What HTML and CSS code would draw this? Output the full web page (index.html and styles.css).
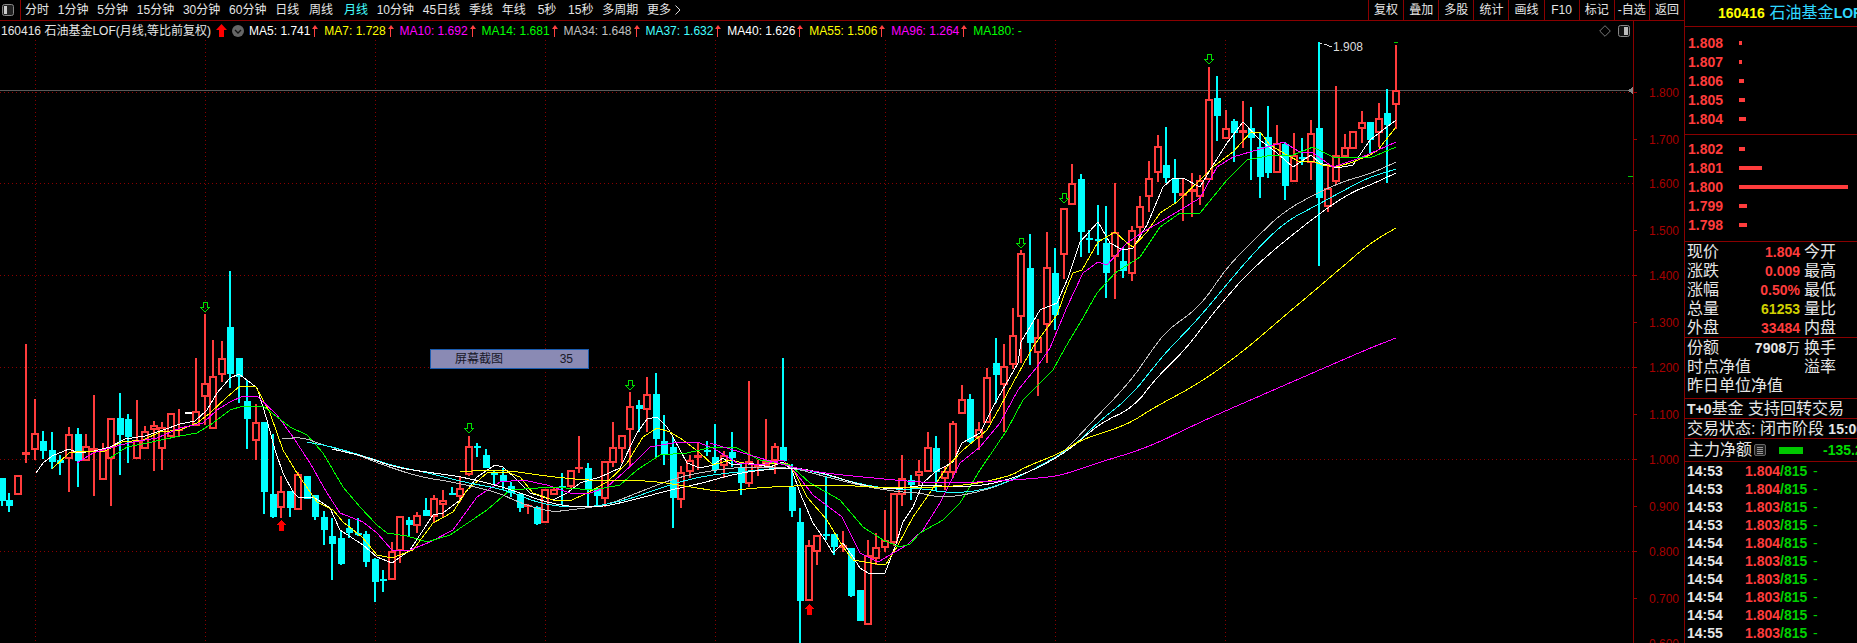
FILE: index.html
```html
<!DOCTYPE html>
<html lang="zh">
<head>
<meta charset="utf-8">
<title>160416 石油基金LOF</title>
<link rel="stylesheet" href="styles.css">
</head>
<body>
<div class="app">
  <main class="left">
    <nav class="toolbar">
      <span class="tool-icon"><svg width="12" height="12" viewBox="0 0 12 12"><rect x="0.5" y="0.5" width="11" height="11" rx="2" fill="#222" stroke="#888"/><rect x="2" y="2" width="3" height="8" fill="#ccc"/></svg></span>
      <div class="periods">
        <span>分时</span><span>1分钟</span><span>5分钟</span><span>15分钟</span><span>30分钟</span><span>60分钟</span><span>日线</span><span class="nudge1">周线</span><span class="nudge2">月线</span><span>10分钟</span><span>45日线</span><span>季线</span><span>年线</span><span class="nudge3">5秒</span><span class="nudge3">15秒</span><span>多周期</span><span class="more">更多<svg width="6" height="10" viewBox="0 0 6 10"><path d="M.5 .5L5 5 .5 9.5" fill="none" stroke="#ddd"/></svg></span>
      </div>
      <div class="actions">
        <span>复权</span><span>叠加</span><span>多股</span><span>统计</span><span>画线</span><span>F10</span><span>标记</span><span>-自选</span><span>返回</span>
      </div>
    </nav>
    <div class="infobar">
      <span class="title">160416 石油基金LOF(月线,等比前复权)</span>
      <svg class="up-big" width="11" height="13" viewBox="0 0 11 13"><path d="M5.5 0L11 6H8V13H3V6H0Z" fill="#ff0000"/></svg>
      <svg class="chev" width="12" height="12" viewBox="0 0 12 12"><circle cx="6" cy="6" r="6" fill="#666"/><path d="M3 5l3 3 3-3" fill="none" stroke="#111" stroke-width="1.3"/></svg>
      <span class="ma white">MA5: 1.741<b class="up"></b></span>
      <span class="ma yellow">MA7: 1.728<b class="up"></b></span>
      <span class="ma magenta">MA10: 1.692<b class="up"></b></span>
      <span class="ma green">MA14: 1.681<b class="up"></b></span>
      <span class="ma grey">MA34: 1.648<b class="up"></b></span>
      <span class="ma cyan">MA37: 1.632<b class="up"></b></span>
      <span class="ma white">MA40: 1.626<b class="up"></b></span>
      <span class="ma yellow">MA55: 1.506<b class="up"></b></span>
      <span class="ma magenta">MA96: 1.264<b class="up"></b></span>
      <span class="ma green">MA180: -</span>
      <div class="corner">
        <svg width="12" height="12" viewBox="0 0 12 12"><path d="M6 .7L11.3 6 6 11.3 .7 6Z" fill="none" stroke="#777"/></svg>
        <svg width="12" height="12" viewBox="0 0 12 12"><rect x="0.5" y="0.5" width="11" height="11" rx="2" fill="#111" stroke="#888"/><rect x="6" y="2" width="4" height="8" fill="#bbb"/></svg>
      </div>
    </div>
    <section class="chart">
      <svg id="kline" width="1684" height="603" viewBox="0 40 1684 603"></svg>
      <div class="tip"><span>屏幕截图</span><span>35</span></div>
    </section>
  </main>

  <aside class="side">
    <header class="side-head"><b class="code">160416</b> <span class="name">石油基金<b>LOF</b></span></header>
    <div class="book sell">
      <div class="lvl"><b>1.808</b><i class="bar" style="width:3px"></i></div>
      <div class="lvl"><b>1.807</b><i class="bar" style="width:3px"></i></div>
      <div class="lvl"><b>1.806</b><i class="bar" style="width:5px"></i></div>
      <div class="lvl"><b>1.805</b><i class="bar" style="width:6px"></i></div>
      <div class="lvl"><b>1.804</b><i class="bar" style="width:7px"></i></div>
    </div>
    <div class="book buy">
      <div class="lvl"><b>1.802</b><i class="bar" style="width:6px"></i></div>
      <div class="lvl"><b>1.801</b><i class="bar" style="width:23px"></i></div>
      <div class="lvl"><b>1.800</b><i class="bar" style="width:109px"></i></div>
      <div class="lvl"><b>1.799</b><i class="bar" style="width:8px"></i></div>
      <div class="lvl"><b>1.798</b><i class="bar" style="width:8px"></i></div>
    </div>
    <div class="stats">
      <div class="stat"><span>现价</span><b class="red">1.804</b><span>今开</span></div>
      <div class="stat"><span>涨跌</span><b class="red">0.009</b><span>最高</span></div>
      <div class="stat"><span>涨幅</span><b class="red">0.50%</b><span>最低</span></div>
      <div class="stat"><span>总量</span><b class="olive">61253</b><span>量比</span></div>
      <div class="stat"><span>外盘</span><b class="red">33484</b><span>内盘</span></div>
    </div>
    <div class="stats fund">
      <div class="stat"><span>份额</span><b class="plain">7908<em>万</em></b><span>换手</span></div>
      <div class="stat"><span class="wide">时点净值</span><b></b><span>溢率</span></div>
      <div class="stat"><span class="wide">昨日单位净值</span></div>
    </div>
    <div class="line-row"><b>T+0</b>基金 支持回转交易</div>
    <div class="line-row">交易状态: 闭市阶段 <b class="clock">15:00</b></div>
    <div class="flow">
      <span>主力净额</span>
      <svg class="flow-ico" width="12" height="12" viewBox="0 0 12 12"><rect x="0.5" y="0.5" width="11" height="11" rx="1.5" fill="#222" stroke="#666"/><path d="M3 3.5H9M3 5.5H9M3 7.5H9M3 9.5H9" stroke="#999"/></svg>
      <i class="flow-bar"></i>
      <b class="flow-val">-135.2</b>
    </div>
    <div class="ticks">
      <div class="tick"><b class="t">14:53</b><b class="p">1.804</b><b class="v">/815</b><b class="d">-</b></div>
      <div class="tick"><b class="t">14:53</b><b class="p">1.804</b><b class="v">/815</b><b class="d">-</b></div>
      <div class="tick"><b class="t">14:53</b><b class="p">1.803</b><b class="v">/815</b><b class="d">-</b></div>
      <div class="tick"><b class="t">14:53</b><b class="p">1.803</b><b class="v">/815</b><b class="d">-</b></div>
      <div class="tick"><b class="t">14:54</b><b class="p">1.804</b><b class="v">/815</b><b class="d">-</b></div>
      <div class="tick"><b class="t">14:54</b><b class="p">1.803</b><b class="v">/815</b><b class="d">-</b></div>
      <div class="tick"><b class="t">14:54</b><b class="p">1.803</b><b class="v">/815</b><b class="d">-</b></div>
      <div class="tick"><b class="t">14:54</b><b class="p">1.803</b><b class="v">/815</b><b class="d">-</b></div>
      <div class="tick"><b class="t">14:54</b><b class="p">1.804</b><b class="v">/815</b><b class="d">-</b></div>
      <div class="tick"><b class="t">14:55</b><b class="p">1.803</b><b class="v">/815</b><b class="d">-</b></div>
    </div>
  </aside>
</div>
<script src="chart.js"></script>
</body>
</html>
```

FILE: styles.css
```css
* { box-sizing: border-box; }
html, body { margin: 0; height: 100%; background: #000; overflow: hidden; }
body { font: 12px/1 "Liberation Sans", "Noto Sans CJK SC", sans-serif; color: #e6e6e6; }
.app { display: flex; width: 1857px; height: 643px; }
.left { width: 1684px; display: flex; flex-direction: column; flex: none; }
.toolbar { display: flex; align-items: center; height: 21px; border-bottom: 1px solid #8a0000; }
.tool-icon { width: 21px; height: 20px; padding: 4px 0 0 2px; border-right: 1px solid #8a0000; }
.tool-icon svg { display: block; }
.periods { display: flex; gap: 8.8px; padding-left: 4px; white-space: nowrap; }
.periods .on, .nudge2 { color: #4ff; }
.nudge1 { margin-left: 1px; }
.nudge2 { margin-left: 2px; }
.nudge3 { margin-left: 3px; }
.more { display: inline-flex; align-items: center; gap: 4px; }
.actions { display: flex; margin-left: auto; width: 316px; height: 20px; }
.actions span { flex: 1 0 35px; display: flex; align-items: center; justify-content: center; border-left: 1px solid #8a0000; white-space: nowrap; }
.infobar { display: flex; align-items: center; width: 1634px; height: 19px; border-right: 1px solid #8a0000; white-space: nowrap; padding-left: 1px; }
.title { color: #e6e6e6; }
.up-big { margin-left: 5px; }
.chev { margin: 0 5px; }
.ma { display: inline-flex; align-items: center; margin-right: 5.9px; }
.up { display: inline-block; position: relative; width: 6px; height: 12px; margin-left: 2px; }
.up::before { content: ""; position: absolute; left: 2px; top: 3px; width: 1px; height: 9px; background: #ff4040; }
.up::after { content: ""; position: absolute; left: 0; top: 0; border: 3px solid transparent; border-top: 0; border-bottom: 4px solid #ff4040; }
.white { color: #fff; } .yellow { color: #ff0; } .magenta { color: #f0f; } .green { color: #0f0; } .grey { color: #c0c0c0; } .cyan { color: #4ff; }
.corner { display: flex; gap: 7px; margin-left: auto; padding-right: 3px; }
.chart { position: relative; height: 603px; }
#kline { display: block; shape-rendering: crispEdges; }
#kline text { font: 12px "Liberation Sans", sans-serif; shape-rendering: auto; }
.tip { position: absolute; left: 430px; top: 309px; width: 159px; height: 20px; display: flex; justify-content: space-between; align-items: center; padding: 0 15px 0 24px; background: #8a8ab4; border: 1px solid #1a5cb0; color: #181828; }
.side { flex: 1; min-width: 0; border-left: 1px solid #8a0000; overflow: hidden; white-space: nowrap; }
.side b { font-weight: 700; }
.side-head { height: 27px; border-bottom: 1px solid #8a0000; padding: 5px 0 0 33px; font-size: 14px; }
.code { color: #ff0; margin-right: 1px; }
.name { color: #2fd8ff; font-size: 16px; }
.name b { font-size: 14px; }
.book { border-bottom: 1px solid #8a0000; }
.sell { height: 108px; padding-top: 6px; }
.buy { height: 107px; padding-top: 4px; }
.lvl { display: flex; align-items: center; height: 19px; padding-left: 3px; }
.lvl b { width: 51px; color: #ff3c3c; font-size: 14px; }
.bar { height: 4px; background: #ff3c3c; }
.stats { height: 96px; border-bottom: 1px solid #8a0000; }
.fund { height: 61px; }
.stat { display: grid; grid-template-columns: 50px 63px auto; column-gap: 0; height: 19px; align-items: center; padding-left: 2px; font-size: 16px; }
.stat > :last-child:not(:first-child) { margin-left: 4px; }
.stat b { font-size: 14px; text-align: right; }
.stat .wide { grid-column: span 2; }
.stat .wide + b { display: none; }
.stat .wide + b + span { grid-column: 3; }
.red { color: #ff3c3c; } .olive { color: #d0d000; } .plain { color: #e6e6e6; }
.plain em { font-style: normal; font-weight: 400; font-size: 14px; }
.line-row { height: 20px; line-height: 20px; padding-left: 2px; font-size: 16px; border-bottom: 1px solid #8a0000; }
.line-row b, .clock { font-size: 14px; }
.flow { display: flex; align-items: center; height: 23px; padding-left: 3px; border-bottom: 1px solid #8a0000; font-size: 16px; }
.flow span { width: 66px; flex: none; }
.flow-ico { flex: none; }
.flow-bar { width: 24px; height: 7px; margin-left: 13px; background: #00c800; flex: none; }
.flow-val { margin-left: 20px; color: #00dc00; font-size: 14px; flex: none; }
.tick { display: flex; align-items: center; height: 18px; padding-left: 2px; font-size: 14px; }
.tick .t { width: 58px; color: #e6e6e6; }
.tick .p { width: 35px; color: #ff3c3c; }
.tick .v { width: 33px; color: #00d000; }
.tick .d { color: #00d000; font-weight: 400; }
```

FILE: chart.js
```js
var C=[
"c2,478,478,501,506","c9,493,500,506,512","r18,475,475,495,495","r26,344,452,455,463","r35,399,433,450,460","c43,431,441,451,459","c52,432,450,462,469","c60,455,460,463,475","r69,427,434,459,492","c78,428,434,461,487","r86,434,446,461,461","r94,395,448,451,496","r103,443,450,480,480","r111,418,418,459,506","c120,393,418,435,475","c128,414,419,437,463","r137,400,440,459,459","r145,426,431,449,449","r154,421,425,430,471","r162,422,427,449,470","r171,413,413,437,437","r179,409,429,430,437","r196,358,411,426,426","r205,314,383,397,425","r213,340,376,429,429","r222,341,358,375,382","c230,271,327,374,388","c239,358,358,377,403","c247,380,401,419,449","r256,404,422,441,460","c264,422,422,492,514","c273,434,494,517,518","r281,476,491,508,518","c290,491,491,508,517","r298,472,474,510,510","c307,476,476,499,499","c315,495,495,517,520","c324,511,517,530,545","c332,518,536,544,580","c341,530,538,564,565","c349,519,528,533,538","c358,518,533,534,536","c366,531,534,562,567","c375,558,559,582,602","c383,570,579,580,592","r392,542,551,580,580","r400,516,516,551,563","c409,517,520,525,537","r417,512,515,526,533","c426,498,510,516,516","r434,495,498,517,522","r443,490,500,505,517","c452,487,493,494,495","r460,477,488,497,502","r469,436,446,475,476","c477,443,446,447,457","c486,449,455,468,468","c494,470,473,474,485","c503,468,475,482,490","c511,482,486,493,497","c520,493,494,508,512","r528,504,505,506,514","c537,506,507,524,525","r545,489,489,523,523","r554,488,489,495,495","c562,473,486,487,505","r571,470,470,487,489","r579,436,467,469,473","c588,463,468,489,508","c597,487,490,496,505","r605,461,461,499,507","r613,422,447,463,467","r622,435,435,449,463","r630,392,406,430,467","c639,400,405,409,432","r647,377,394,410,432","c656,373,394,439,457","c664,415,441,455,465","c673,437,447,498,528","r681,466,472,500,508","r690,455,460,472,478","r698,443,455,458,470","c707,441,450,451,456","c715,424,457,470,473","r724,451,455,466,478","c732,432,452,458,467","c741,462,468,483,495","r749,381,461,484,487","r758,460,465,468,476","r766,419,461,466,466","r775,443,446,461,474","c783,358,447,461,461","c792,464,487,511,517","c800,508,522,601,643","r809,540,545,601,601","r817,535,535,552,565","c826,476,534,535,540","c834,534,534,547,555","r843,531,545,548,552","c851,548,548,596,597","c860,590,590,621,621","r868,540,555,625,625","r876,533,547,559,565","r885,510,540,548,552","r894,493,493,543,546","r902,455,478,495,506","c911,475,480,485,500","r919,460,471,476,485","r928,432,447,472,472","c936,436,448,472,491","r945,466,471,479,490","r953,421,423,473,478","r962,385,399,414,414","c970,394,399,442,443","r979,422,429,438,450","r987,368,377,423,423","c996,338,363,375,403","r1004,344,366,385,432","r1013,308,335,365,369","r1021,250,253,317,363","c1030,234,268,343,365","r1038,319,337,353,396","r1047,232,267,325,363","c1055,248,273,315,330","r1064,208,208,255,279","r1072,164,183,205,205","c1081,174,179,232,257","c1089,230,238,239,253","c1098,205,239,240,255","c1106,206,243,273,298","r1115,183,232,257,299","c1123,248,261,271,278","r1132,226,230,274,281","r1140,196,206,228,240","r1149,161,178,197,212","r1158,135,146,173,182","c1166,127,165,178,183","c1175,159,178,193,203","r1183,178,193,196,221","r1192,173,189,192,217","r1200,175,180,197,205","r1209,67,99,180,180","c1217,76,98,116,141","r1226,110,128,139,139","c1234,119,121,133,162","r1243,101,130,133,148","c1251,107,128,138,180","c1260,133,147,177,198","c1268,106,137,173,178","r1277,125,143,173,173","c1285,142,144,186,200","r1294,133,155,182,182","c1302,138,157,158,165","r1311,120,133,163,180","c1319,42,128,198,266","r1328,163,188,207,212","r1336,86,155,182,185","r1345,134,147,157,157","r1353,131,131,149,149","r1362,111,122,129,143","c1370,122,122,140,153","r1379,103,118,133,147","c1387,89,113,125,183","r1396,45,90,105,129"
];
/* colour, smoothing passes, points */
var L=[
["#fff",0,"36,473 43,463 52,456 69,449 78,453 94,451 110,447 125,439 145,436 163,430 180,424 195,421 207,410 217,393 230,378 239,374 247,380 257,388 267,420 275,450 283,473 293,492 298,497 315,498 330,508 340,530 363,545 377,557 392,563 410,550 433,515 443,513 460,500 477,477 495,465 503,467 515,478 530,493 553,500 567,493 580,483 600,477 620,468 637,433 647,419 657,417 667,427 673,437 687,463 700,468 713,465 723,458 732,465 748,463 770,467 783,462 792,470 800,493 813,523 825,540 833,553 843,543 853,557 860,568 868,573 885,573 895,547 903,522 913,507 923,483 935,472 953,462 962,443 980,433 993,407 1010,377 1018,363 1021,342 1040,310 1057,303 1068,278 1080,242 1098,222 1110,243 1123,250 1133,248 1147,225 1163,187 1173,178 1183,178 1200,187 1210,170 1227,143 1243,122 1260,140 1277,153 1293,167 1311,155 1320,163 1337,168 1353,165 1370,140 1396,120"],
["#ff0",0,"52,469 69,453 83,451 103,452 122,442 143,440 160,432 180,430 197,423 210,413 227,397 240,386 256,387 270,413 283,450 297,473 317,502 333,510 343,522 362,537 377,555 392,558 413,550 433,523 453,512 467,490 487,473 507,472 520,477 533,493 553,500 570,501 587,493 607,482 627,463 643,437 657,428 670,432 683,440 700,453 713,465 730,460 753,465 773,463 787,463 795,473 807,497 827,520 843,547 853,560 877,564 886,564 897,547 913,517 927,497 947,467 963,450 987,430 1000,407 1013,383 1033,347 1057,315 1067,287 1073,273 1082,270 1098,242 1115,232 1127,243 1133,247 1147,232 1160,213 1177,202 1200,180 1213,167 1233,152 1250,133 1260,132 1270,145 1287,155 1300,162 1313,161 1322,165 1337,167 1353,162 1370,155 1378,150 1396,127"],
["#f0f",0,"77,463 93,453 113,447 133,442 157,438 180,428 203,423 217,410 230,402 243,396 258,397 277,415 293,437 310,463 327,493 340,513 363,522 377,533 392,550 410,550 430,542 453,530 477,497 500,482 523,480 547,485 570,493 590,493 607,487 623,473 637,460 650,447 673,443 697,442 713,448 737,463 760,465 783,460 795,472 813,495 842,517 860,553 878,562 907,545 923,530 940,503 960,463 980,447 1000,423 1018,390 1037,367 1050,348 1067,307 1083,273 1098,262 1107,265 1127,243 1143,232 1167,218 1200,198 1217,167 1233,157 1267,147 1283,142 1300,152 1313,153 1333,167 1360,158 1396,142"],
["#0f0",0,"110,458 127,447 147,443 180,436 197,433 213,423 230,410 243,406 263,406 290,427 307,435 323,453 343,487 360,507 377,525 387,533 407,536 427,542 450,535 487,510 510,490 553,487 593,490 620,485 637,470 660,455 687,453 713,447 737,448 760,460 790,465 810,483 840,500 863,527 883,540 900,547 910,544 920,533 943,520 960,503 980,470 1007,430 1023,400 1053,370 1065,348 1080,323 1097,293 1115,273 1140,257 1160,227 1180,213 1200,213 1227,180 1247,160 1267,156 1293,155 1313,147 1333,157 1370,158 1396,147"],
["#c0c0c0",2,"282,439 302,437 323,445 353,453 383,465 420,477 453,482 497,492 520,503 550,512 570,510 607,505 637,493 670,480 697,473 737,467 790,467 827,477 867,487 900,492 920,493 943,498 980,492 1013,480 1047,462 1063,453 1087,427 1130,382 1150,353 1167,330 1200,307 1227,267 1257,237 1283,212 1317,193 1347,180 1370,174 1396,162"],
["#2ff",2,"307,442 333,447 367,457 390,465 433,474 463,482 507,490 543,505 587,508 627,500 660,488 697,477 737,472 790,467 820,473 863,485 900,490 920,488 947,493 980,491 1013,480 1047,462 1073,447 1097,423 1130,397 1157,363 1170,348 1200,317 1247,260 1283,223 1317,205 1350,187 1370,177 1396,169"],
["#fff",2,"332,449 367,457 393,467 433,473 463,477 507,488 553,505 597,508 633,500 670,490 703,483 737,473 790,467 820,472 867,487 900,489 920,485 967,487 997,483 1030,472 1067,452 1100,423 1133,408 1157,377 1185,350 1213,313 1253,267 1317,215 1350,193 1370,185 1396,173"],
["#ff0",2,"460,472 497,469 553,477 597,481 647,480 697,488 723,492 753,488 790,486 840,485 887,488 947,487 980,483 1013,475 1023,468 1063,452 1080,440 1127,425 1153,408 1200,383 1245,350 1283,317 1333,275 1370,243 1396,228"],
["#f0f",2,"710,443 790,467 823,473 883,479 930,483 987,482 1040,478 1063,475 1097,463 1147,448 1200,422 1285,385 1370,348 1396,338"]
];
function smooth(str,n){
  var p=str.split(" ").map(function(q){return q.split(",").map(Number);});
  for(var k=0;k<n;k++){
    var o=[p[0]];
    for(var i=0;i<p.length-1;i++){
      var a=p[i],b=p[i+1];
      o.push([a[0]*.75+b[0]*.25,a[1]*.75+b[1]*.25],[a[0]*.25+b[0]*.75,a[1]*.25+b[1]*.75]);
    }
    o.push(p[p.length-1]);p=o;
  }
  return p.map(function(q){return q[0].toFixed(1)+","+q[1].toFixed(1);}).join(" ");
}
var s="",RED="#ff3c3c",DR="#8a0000";
function rect(x,y,w,h,f){return '<rect x="'+x+'" y="'+y+'" width="'+w+'" height="'+h+'" fill="'+f+'"/>';}
function line(a,b,c,d,col,dash){return '<line x1="'+a+'" y1="'+b+'" x2="'+c+'" y2="'+d+'" stroke="'+col+'"'+(dash?' stroke-dasharray="1 3"':'')+'/>';}
[92.5,183.5,275.5,367.5,459.5,551.5,643.5].forEach(function(y){s+=line(0,y,1633,y,DR,1);});
[35.5,205.5,375.5,545.5,715.5,885.5,1055.5,1225.5].forEach(function(x){s+=line(x,40,x,643,DR,1);});
s+=line(0,90.5,1630,90.5,"#5a5a5a");
s+='<path d="M1628 90.5L1633 87V94Z" fill="#888"/>';
s+=line(1633.5,40,1633.5,643,DR);
[["1.800",92],["1.700",139],["1.600",183],["1.500",230],["1.400",275],["1.300",322],["1.200",367],["1.100",414],["1.000",459],["0.900",506],["0.800",551],["0.700",598],["0.600",643]].forEach(function(a){
  if(a[0]!="1.600")s+=line(1634,a[1]+.5,1637,a[1]+.5,"#a00000");
  s+='<text x="1649" y="'+(a[1]+5)+'" fill="#a80000">'+a[0]+'</text>';
});
s+=line(1628,176.5,1633,176.5,"#00c800");
C.forEach(function(k){
  var r=k[0]=="r",p=k.slice(1).split(",").map(Number),x=p[0],hi=p[1],t=p[2],b=p[3],lo=p[4],col=r?RED:"#00ffff";
  s+=rect(x-1,hi,2,lo-hi,col);
  if(r){s+=rect(x-4,t,8,Math.max(b-t,2),col);if(b-t>4)s+=rect(x-2,t+2,4,b-t-4,"#000");}
  else s+=rect(x-3,t,7,Math.max(b-t,2),col);
});
s+=rect(185,412,7,2,"#fff");
L.forEach(function(l){s+='<polyline points="'+smooth(l[2],l[1])+'" fill="none" stroke="'+l[0]+'"/>';});
[[205,302],[469,423],[630,380],[1021,238],[1064,193],[1209,54]].forEach(function(a){
  s+='<path transform="translate('+a[0]+' '+a[1]+')" d="M-2 0H2V5H5L0 10L-5 5H-2Z" fill="none" stroke="#00e000"/>';
});
[[281,520],[809,604]].forEach(function(a){
  s+='<path transform="translate('+a[0]+' '+a[1]+')" d="M0 0L5 5H2.5V11H-2.5V5H-5Z" fill="#ff0000"/>';
});
s+='<path d="M1320 43H1322M1324 44L1332 47" stroke="#ddd" fill="none"/>';
s+='<text x="1333" y="51" fill="#ddd">1.908</text>';
s+=line(1394,42,1398,42,"#00c800");
document.getElementById("kline").innerHTML=s;
```
